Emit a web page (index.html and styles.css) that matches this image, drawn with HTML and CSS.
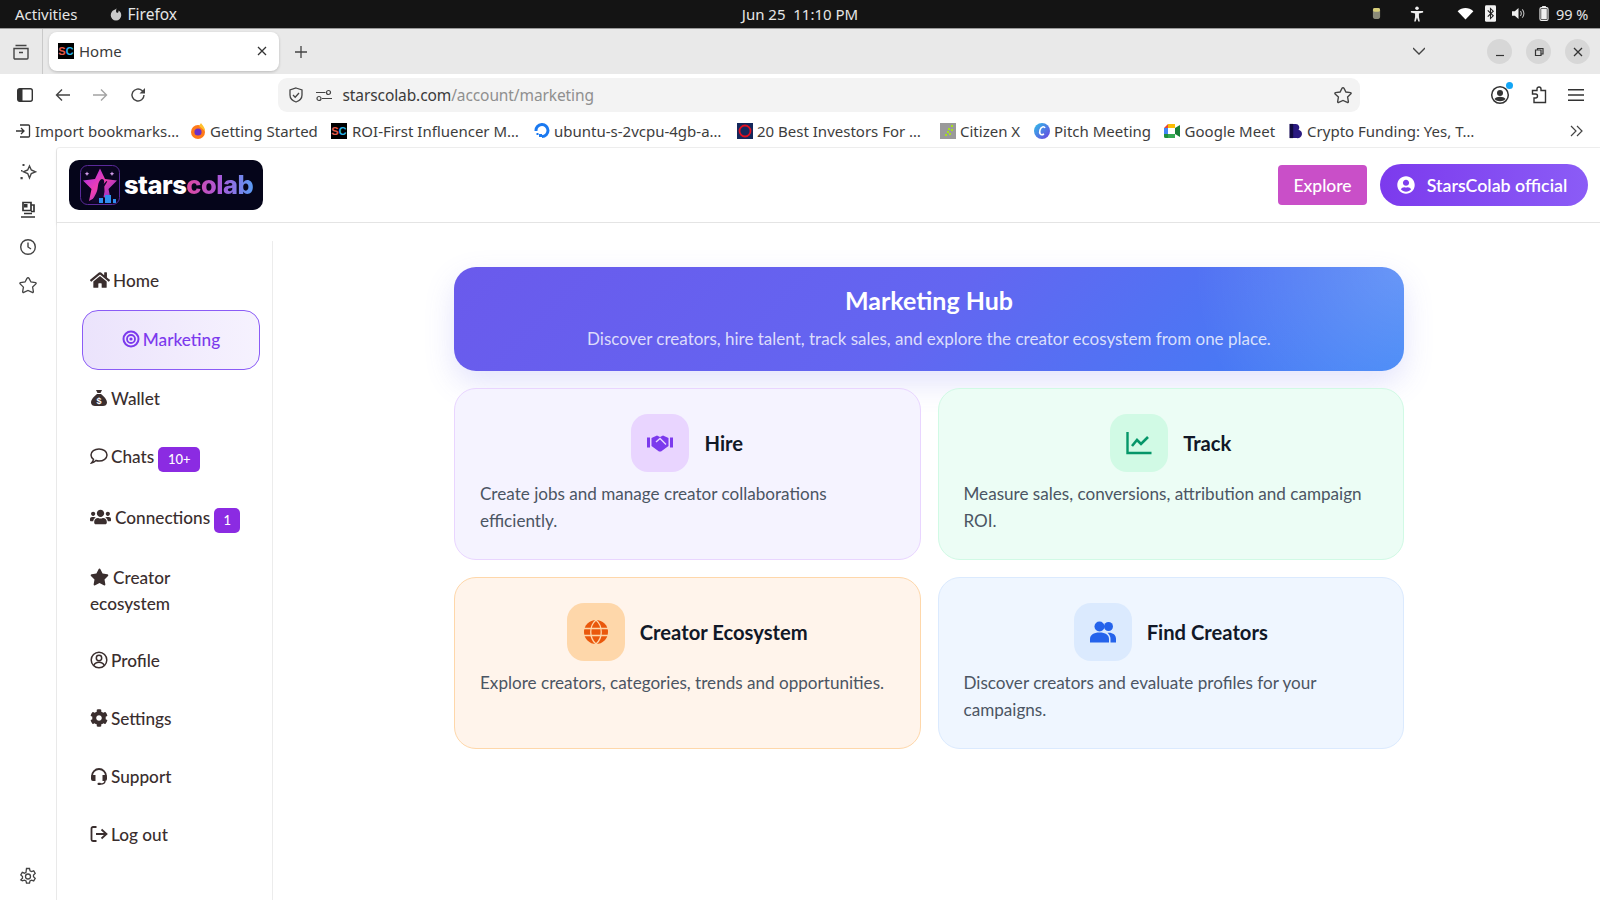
FILE: index.html
```html
<!DOCTYPE html>
<html lang="en">
<head>
<meta charset="utf-8">
<title>Home</title>
<link rel="stylesheet" href="styles.css">
</head>
<body>
<div class="sysbar">
  <div class="sys-left">
    <span>Activities</span>
    <span class="sys-app"><svg class="i14" viewBox="0 0 24 24"><path fill="#c9c9c9" d="M13 2c-1 2-4 2-6 4 0 0-4 3-4 8a9 9 0 0 0 18 0c0-4-2-7-5-8 1 2 0 4-2 4-2 0-2.500-4-1-8z"/></svg>Firefox</span>
  </div>
  <div class="sys-clock">Jun 25&nbsp; 11:10 PM</div>
  <div class="sys-right">
    <svg class="t-can" viewBox="0 0 10 14"><rect x="1" y="1" width="8" height="12" rx="2" fill="#8a8a78"/><rect x="1" y="1" width="8" height="4" rx="2" fill="#d8cf7a"/></svg>
    <svg class="t-acc" viewBox="0 0 16 18"><circle cx="8" cy="2.500" r="2" fill="#eee"/><path fill="#eee" d="M1 5.500h14v1.800l-4.800 1V12l1 5.500h-1.700L8 13l-1.500 4.500H4.800l1-5.500V8.300L1 7.300z"/></svg>
    <svg class="t-wifi" viewBox="0 0 18 14"><path fill="#fff" d="M9 13.500 0.500 4.500C5.500 0 12.500 0 17.500 4.500z"/></svg>
    <svg class="t-bt" viewBox="0 0 12 18"><rect width="12" height="18" rx="1.500" fill="#f2f2f2"/><path fill="none" stroke="#222" stroke-width="1.200" d="M3 5.500l6 6-3 3v-11l3 3-6 6"/></svg>
    <svg class="t-vol" viewBox="0 0 16 14"><path fill="#eee" d="M1 4.500h3L8 1v12L4 9.500H1z"/><path fill="none" stroke="#bbb" stroke-width="1.200" d="M10 4.500a3.500 3.500 0 0 1 0 5M12 2.500a6.500 6.500 0 0 1 0 9"/></svg>
    <svg class="t-bat" viewBox="0 0 10 16"><rect x=".7" y="1.700" width="8.600" height="13.600" rx="1.500" fill="none" stroke="#eee" stroke-width="1.200"/><rect x="3" y="0" width="4" height="1.700" fill="#eee"/><rect x="2" y="3" width="6" height="11" fill="#eee"/></svg>
    <span class="t-pct">99 %</span>
  </div>
</div>

<div class="tabstrip">
  <div class="views"><svg class="i18" viewBox="0 0 18 18"><path fill="none" stroke="#444" stroke-width="1.400" d="M3.500 2.500h11M2 5.500h14v9.500a1 1 0 0 1-1 1H3a1 1 0 0 1-1-1zM7 9.500h4"/></svg></div>
  <div class="tab">
    <span class="fav-sc"><b class="r">S</b><b class="b">C</b></span>
    <span class="tab-title">Home</span>
    <svg class="i12 tab-x" viewBox="0 0 12 12"><path stroke="#333" stroke-width="1.300" d="M2 2l8 8M10 2l-8 8"/></svg>
  </div>
  <svg class="i12 plus" viewBox="0 0 12 12"><path stroke="#444" stroke-width="1.300" d="M6 0v12M0 6h12"/></svg>
  <div class="strip-fill"></div>
  <svg class="i12 chev" viewBox="0 0 12 8"><path fill="none" stroke="#444" stroke-width="1.300" d="M0 1l6 6 6-6"/></svg>
  <div class="winbtns">
    <span class="winbtn"><svg class="i10" viewBox="0 0 10 10"><path stroke="#333" stroke-width="1.200" d="M1 8.500h8"/></svg></span>
    <span class="winbtn"><svg class="i10" viewBox="0 0 10 10"><path fill="none" stroke="#333" stroke-width="1.200" d="M1.500 3h5.500v5.500H1.500zM3.500 3V1.500H9V7H7"/></svg></span>
    <span class="winbtn"><svg class="i12" viewBox="0 0 12 12"><path stroke="#333" stroke-width="1.300" d="M2 2l8 8M10 2l-8 8"/></svg></span>
  </div>
</div>

<div class="navbar">
  <svg class="i16 n-side" viewBox="0 0 16 14"><rect x=".7" y=".7" width="14.600" height="12.600" rx="2" fill="none" stroke="#333" stroke-width="1.400"/><rect x="1" y="1" width="4.500" height="12" fill="#333"/></svg>
  <svg class="i16 n-btn" viewBox="0 0 16 16"><path fill="none" stroke="#444" stroke-width="1.400" d="M15 8H1.500M7 2.500 1.500 8 7 13.500"/></svg>
  <svg class="i16 n-btn" viewBox="0 0 16 16"><path fill="none" stroke="#a3a3a3" stroke-width="1.400" d="M1 8h13.500M9 2.500 14.500 8 9 13.500"/></svg>
  <svg class="i16 n-btn" viewBox="0 0 16 16"><path fill="none" stroke="#444" stroke-width="1.400" d="M14 8a6 6 0 1 1-2-4.500L14 5.500"/><path fill="#444" d="M15 1v5.500H9.500z"/></svg>
  <div class="urlbar">
    <svg class="i16" viewBox="0 0 16 16"><path fill="none" stroke="#444" stroke-width="1.300" d="M8 1l6 2v5c0 3.500-3 6-6 7-3-1-6-3.500-6-7V3z"/><path fill="none" stroke="#444" stroke-width="1.300" d="M5 8l2.200 2.200L11 6"/></svg>
    <svg class="i16 u-sl" viewBox="0 0 16 12"><path stroke="#444" stroke-width="1.200" d="M0 3.500h9.500M6 9.500h10"/><circle cx="12.500" cy="3.500" r="2" fill="none" stroke="#444" stroke-width="1.200"/><circle cx="3" cy="9.500" r="2" fill="none" stroke="#444" stroke-width="1.200"/></svg>
    <span class="url"><span class="url-host">starscolab.com</span><span class="url-path">/account/marketing</span></span>
    <svg class="i18 u-star" viewBox="0 0 576 512"><path fill="none" stroke="#444" stroke-width="44" d="M259.300 37.800 194 160.200 47.900 181.500c-20 3-26 26-12 39l105.700 103-25 145.500c-3 20 17 34 35 25L288 430.600l137.400 62.400c18 9 38-5 35-25l-25-145.500 105.700-103c14-13 8-36-12-39L382 160.200 316.700 37.800c-9-18-48-18-57.400 0z"/></svg>
  </div>
  <div class="nav-right">
    <span class="prof"><svg class="i20" viewBox="0 0 20 20"><circle cx="10" cy="10" r="8.300" fill="none" stroke="#333" stroke-width="1.500"/><circle cx="10" cy="8" r="3" fill="#333"/><path fill="#333" d="M4.500 14c2-3 9-3 11 0-2.500 3-8.500 3-11 0z"/></svg><i class="prof-dot"></i></span>
    <svg class="i18" viewBox="0 0 16 18"><path fill="none" stroke="#333" stroke-width="1.400" d="M6 4.500V3a2 2 0 0 1 4 0v1.500h4.500v12H3v-4.500h1.500a2 2 0 0 0 0-4H1.500V4.500z"/></svg>
    <svg class="i16 burger" viewBox="0 0 14 12"><path stroke="#333" stroke-width="1.300" d="M0 1.500h14M0 6h14M0 10.500h14"/></svg>
  </div>
</div>

<div class="bookmarks">
  <span class="bm bm1"><svg class="i16" viewBox="0 0 16 16"><path fill="none" stroke="#333" stroke-width="1.300" d="M5 2h8.500a1 1 0 0 1 1 1v10a1 1 0 0 1-1 1H5M1 8h8M6 5l3 3-3 3"/></svg>Import bookmarks…</span>
  <span class="bm bm2"><svg class="i16" viewBox="0 0 16 16"><circle cx="8" cy="9" r="7" fill="#ff7a1a"/><path fill="#ffc02e" d="M11 0c1 2 4 4 4 8L9 3z"/><circle cx="8" cy="9" r="3.600" fill="#6b2fc9"/></svg>Getting Started</span>
  <span class="bm bm3"><span class="fav-sc"><b class="r">S</b><b class="b">C</b></span>ROI-First Influencer M…</span>
  <span class="bm bm4"><svg class="i16" viewBox="0 0 16 16"><path fill="none" stroke="#1a79f0" stroke-width="3" d="M8 13.500A6 6 0 1 0 2 8"/><rect x="5" y="11" width="3" height="3" fill="#1a79f0"/><rect x="2.500" y="10" width="2" height="2" fill="#1a79f0"/></svg>ubuntu-s-2vcpu-4gb-a…</span>
  <span class="bm bm5"><svg class="i16" viewBox="0 0 16 16"><rect width="16" height="16" fill="#14285c"/><circle cx="8" cy="8" r="5.500" fill="none" stroke="#e01020" stroke-width="1.800"/></svg>20 Best Investors For …</span>
  <span class="bm bm6"><svg class="i16" viewBox="0 0 16 16"><rect width="16" height="16" fill="#9a9a9a"/><path fill="#a6e01e" d="M11 2h2v2h-2zM8 5h2v2H8zM11 6h2v2h-2zM7 8h2v2H7zM9 10h2v2H9zM5 11h2v2H5z"/></svg>Citizen X</span>
  <span class="bm bm7"><svg class="i16" viewBox="0 0 16 16"><defs><linearGradient id="cg" x1="0" y1="0" x2="1" y2="1"><stop offset="0" stop-color="#2fc0e8"/><stop offset="1" stop-color="#6a3fe0"/></linearGradient></defs><circle cx="8" cy="8" r="8" fill="url(#cg)"/><path fill="none" stroke="#fff" stroke-width="1.600" d="M11 5c-1-2-4-1.500-5 2s.5 6 4 4"/></svg>Pitch Meeting</span>
  <span class="bm bm8"><svg class="i16" viewBox="0 0 16 14"><path fill="#ea4335" d="M0 4l4-4v4z"/><path fill="#fbbc04" d="M4 0h7v4H4z"/><path fill="#4285f4" d="M0 4h4v6H0z"/><path fill="#34a853" d="M4 10h7v4H4z"/><path fill="#188038" d="M11 4v6l5 3V1z"/><path fill="#1e8e3e" d="M0 10h4v4H1.500A1.500 1.500 0 0 1 0 12.500z"/></svg>Google Meet</span>
  <span class="bm bm9"><svg class="i16" viewBox="0 0 16 18"><path fill="#2a1a80" d="M2 1h7a4 4 0 0 1 3 6.500A4.500 4.500 0 0 1 10 17H2z"/><path fill="#120c40" d="M2 1h4v16H2z"/></svg>Crypto Funding: Yes, T…</span>
  <svg class="i14 bm-more" viewBox="0 0 14 12"><path fill="none" stroke="#444" stroke-width="1.200" d="M1 1l5 5-5 5M7 1l5 5-5 5"/></svg>
</div>

<div class="browser-body">
  <aside class="ffside">
    <div class="ff-top">
      <svg class="i18" viewBox="0 0 18 18"><path fill="none" stroke="#444" stroke-width="1.400" d="M10.500 3l1.800 4 4.200 1.800-4.200 1.800-1.800 4.400-1.800-4.400-4.200-1.800 4.200-1.800z"/><path fill="#444" d="M3.500 1h2v2h-2zM1.500 14h2.200v2.200H1.500zM2 7h1.500v1.500H2z"/></svg>
      <svg class="i18" viewBox="0 0 18 18"><path fill="none" stroke="#333" stroke-width="1.700" d="M4 1.500h8v8H4zM12 4h3v6.500h-3M2 16h14M5 12.500h8"/><rect x="5" y="3" width="3.500" height="3.500" fill="#333"/></svg>
      <svg class="i18" viewBox="0 0 18 18"><circle cx="9" cy="9" r="7.300" fill="none" stroke="#444" stroke-width="1.400"/><path fill="none" stroke="#444" stroke-width="1.400" d="M9 4.500V9l3 2"/></svg>
      <svg class="i18" viewBox="0 0 576 512"><path fill="none" stroke="#444" stroke-width="42" d="M259.300 37.800 194 160.200 47.900 181.500c-20 3-26 26-12 39l105.700 103-25 145.500c-3 20 17 34 35 25L288 430.600l137.400 62.400c18 9 38-5 35-25l-25-145.500 105.700-103c14-13 8-36-12-39L382 160.200 316.700 37.800c-9-18-48-18-57.400 0z"/></svg>
    </div>
    <svg class="i18" viewBox="0 0 18 18"><path fill="none" stroke="#444" stroke-width="1.300" d="M7.500 1.500h3l.5 2.300 1.500.8 2.200-.8 1.500 2.600-1.700 1.600v1.700l1.700 1.600-1.500 2.600-2.200-.8-1.500.8-.5 2.300h-3l-.5-2.300-1.500-.8-2.200.8L1.800 12.900l1.700-1.600V9.600L1.800 8 3.300 5.400l2.200.8 1.500-.8z"/><circle cx="9" cy="9.500" r="2.500" fill="none" stroke="#444" stroke-width="1.300"/></svg>
  </aside>

  <div class="page">
    <header class="app-header">
      <div class="logo">
        <svg class="logo-mark" viewBox="0 0 40 40">
          <defs><linearGradient id="lg" x1="0" y1="0" x2="1" y2="1"><stop offset="0" stop-color="#a22bf0"/><stop offset=".5" stop-color="#f03fb0"/><stop offset="1" stop-color="#6a2fd0"/></linearGradient></defs>
          <rect x=".5" y=".5" width="39" height="39" rx="7" fill="#0a0420" stroke="#5b2a9a"/>
          <path fill="url(#lg)" d="M20 3.500l5 10.500 12 1.500-8.500 8.500 2.500 12-11-6-11 6 2.500-12-8.500-8.500 12-1.500z"/>
          <path fill="#12062c" d="M22 14c2.500 0 2.500 3.500 1.700 5l2.800-3 .8.600-3 5 .2 5-2 11H11c3.500-6 6-10 6.500-13.500.5-3 .500-5 1.500-7 .6-1.400 1.800-3.100 3-3.100z"/>
          <path fill="#2f8ff0" d="M19 33h4v5h-4zM25 30h6v8h-6zM33 34h3v4h-3z"/>
          <path fill="#d9a0f0" d="M7 6.500l.7 1.600 1.600.7-1.600.7L7 11.100l-.7-1.600L4.700 8.800l1.600-.7zM32 6.500l.7 1.600 1.600.7-1.600.7-.7 1.600-.7-1.600-1.600-.7 1.600-.7z"/>
        </svg>
        <span class="logo-text">stars<span class="logo-grad">colab</span></span>
      </div>
      <div class="head-actions">
        <button class="explore">Explore</button>
        <button class="account"><svg class="i18" viewBox="0 0 496 512"><path fill="#fff" d="M248 8C111 8 0 119 0 256s111 248 248 248 248-111 248-248S385 8 248 8zm0 96c48.600 0 88 39.400 88 88s-39.400 88-88 88-88-39.400-88-88 39.400-88 88-88zm0 344c-58.700 0-111.300-26.600-146.500-68.200 18.800-35.400 55.600-59.800 98.500-59.800 2.400 0 4.800.4 7.100 1.100 13 4.200 26.600 6.900 40.900 6.900 14.300 0 28-2.700 40.900-6.900 2.300-.7 4.700-1.100 7.100-1.100 42.900 0 79.700 24.400 98.500 59.800C359.300 421.400 306.700 448 248 448z"/></svg>StarsColab official</button>
      </div>
    </header>

    <div class="app-body">
      <nav class="sidenav">
        <a class="nav-item"><svg class="ni w20" viewBox="0 0 576 512"><path d="M280.370 148.260L96 300.110V464a16 16 0 0 0 16 16l112.060-.29a16 16 0 0 0 15.920-16V368a16 16 0 0 1 16-16h64a16 16 0 0 1 16 16v95.640a16 16 0 0 0 16 16.050L464 480a16 16 0 0 0 16-16V300L295.670 148.260a12.190 12.190 0 0 0-15.300 0zM571.600 251.470L488 182.560V44.050a12 12 0 0 0-12-12h-56a12 12 0 0 0-12 12v72.610L318.470 43a48 48 0 0 0-61 0L4.340 251.470a12 12 0 0 0-1.600 16.900l25.500 31A12 12 0 0 0 45.150 301l235.220-193.740a12.190 12.190 0 0 1 15.300 0L530.900 301a12 12 0 0 0 16.900-1.600l25.500-31a12 12 0 0 0-1.700-16.930z"/></svg>Home</a>
        <a class="nav-item active"><svg class="ni" viewBox="0 0 18 18"><circle cx="9" cy="9" r="7.500" fill="none" stroke="#7c3aed" stroke-width="2"/><circle cx="9" cy="9" r="4" fill="none" stroke="#7c3aed" stroke-width="1.800"/><circle cx="9" cy="9" r="1.600" fill="#7c3aed"/></svg>Marketing</a>
        <a class="nav-item"><svg class="ni" viewBox="0 0 18 18"><path d="M6 1h6l-1.500 3h-3zM7 5h4c3 2.500 6 5.500 6 8.500 0 2.500-2 3.500-4 3.500H5c-2 0-4-1-4-3.500C1 10.500 4 7.500 7 5z"/><text class="dollar" x="9" y="14.500">$</text></svg>Wallet</a>
        <a class="nav-item"><svg class="ni" viewBox="0 0 18 18"><path fill="none" stroke="currentColor" stroke-width="1.500" d="M9 2c4.400 0 8 2.600 8 6s-3.600 6-8 6c-1 0-2-.1-3-.5-1 1-2.500 2.200-4.500 2.500 1-1.200 1.700-2.300 2-3.700C2 11.200 1 9.700 1 8c0-3.400 3.600-6 8-6z"/></svg>Chats<span class="badge">10+</span></a>
        <a class="nav-item"><svg class="ni w21" viewBox="0 0 640 512"><path d="M96 224c35.300 0 64-28.700 64-64s-28.700-64-64-64-64 28.700-64 64 28.700 64 64 64zm448 0c35.300 0 64-28.700 64-64s-28.700-64-64-64-64 28.700-64 64 28.700 64 64 64zm32 32h-64c-17.600 0-33.500 7.100-45.100 18.600 40.300 22.100 68.900 62 75.100 109.400h66c17.700 0 32-14.300 32-32v-32c0-35.300-28.700-64-64-64zm-256 0c61.900 0 112-50.100 112-112S381.900 32 320 32 208 82.100 208 144s50.100 112 112 112zm76.800 32h-8.300c-20.800 10-43.900 16-68.500 16s-47.600-6-68.500-16h-8.300C179.600 288 128 339.600 128 403.200V432c0 26.500 21.500 48 48 48h288c26.500 0 48-21.500 48-48v-28.800c0-63.600-51.600-115.200-115.200-115.200zm-223.700-13.400C161.500 263.100 145.600 256 128 256H64c-35.300 0-64 28.700-64 64v32c0 17.700 14.300 32 32 32h65.900c6.300-47.400 34.900-87.300 75.200-109.400z"/></svg>Connections<span class="badge one">1</span></a>
        <a class="nav-item"><svg class="ni w19" viewBox="0 0 576 512"><path d="M259.300 17.800L194 150.200 47.900 171.500c-26.200 3.800-36.700 36.100-17.700 54.600l105.700 103-25 145.500c-4.500 26.300 23.200 46 46.400 33.700L288 439.600l130.700 68.700c23.200 12.200 50.900-7.400 46.400-33.700l-25-145.500 105.700-103c19-18.500 8.500-50.800-17.700-54.600L382 150.200 316.700 17.800c-11.700-23.600-45.600-23.900-57.400 0z"/></svg>Creator ecosystem</a>
        <a class="nav-item"><svg class="ni" viewBox="0 0 18 18"><circle cx="9" cy="9" r="7.800" fill="none" stroke="currentColor" stroke-width="1.500"/><circle cx="9" cy="7" r="2.700" fill="none" stroke="currentColor" stroke-width="1.500"/><path fill="none" stroke="currentColor" stroke-width="1.500" d="M3.800 14.500c1-2.500 3-3.200 5.200-3.200s4.200.7 5.200 3.200"/></svg>Profile</a>
        <a class="nav-item"><svg class="ni" viewBox="0 0 512 512"><path d="M487.400 315.700l-42.600-24.600c4.300-23.200 4.300-47 0-70.200l42.600-24.600c4.900-2.800 7.100-8.600 5.500-14-11.100-35.600-30-67.800-54.700-94.600-3.800-4.100-10-5.100-14.800-2.300L380.800 110c-17.900-15.400-38.500-27.300-60.800-35.100V25.800c0-5.600-3.900-10.500-9.400-11.700-36.700-8.200-74.300-7.800-109.200 0-5.500 1.200-9.400 6.100-9.400 11.700V75c-22.200 7.900-42.800 19.800-60.800 35.100L88.700 85.500c-4.900-2.800-11-1.900-14.800 2.300-24.700 26.700-43.600 58.900-54.700 94.600-1.700 5.400.6 11.200 5.500 14L67.300 221c-4.300 23.200-4.300 47 0 70.200l-42.600 24.600c-4.900 2.800-7.100 8.600-5.500 14 11.100 35.600 30 67.800 54.700 94.600 3.800 4.100 10 5.100 14.800 2.300l42.600-24.600c17.900 15.400 38.500 27.300 60.800 35.100v49.200c0 5.600 3.900 10.500 9.400 11.700 36.700 8.200 74.300 7.800 109.200 0 5.500-1.200 9.400-6.100 9.400-11.700v-49.200c22.200-7.900 42.800-19.800 60.800-35.100l42.600 24.600c4.900 2.800 11 1.900 14.800-2.300 24.700-26.700 43.600-58.900 54.700-94.600 1.500-5.500-.7-11.300-5.600-14.100zM256 336c-44.100 0-80-35.900-80-80s35.900-80 80-80 80 35.900 80 80-35.900 80-80 80z"/></svg>Settings</a>
        <a class="nav-item"><svg class="ni" viewBox="0 0 18 18"><path fill="none" stroke="currentColor" stroke-width="1.800" d="M2 9.500V9a7 7 0 0 1 14 0v.5"/><path d="M2 8h3.500v6H3a2 2 0 0 1-2-2v-2a2 2 0 0 1 1-2zM12.500 8H16a2 2 0 0 1 1 2v2a2 2 0 0 1-2 2h-2.500z"/><path fill="none" stroke="currentColor" stroke-width="1.400" d="M15 14c0 2-2 3-4.500 3"/><rect x="7.500" y="15.700" width="3.500" height="2.300" rx="1"/></svg>Support</a>
        <a class="nav-item"><svg class="ni" viewBox="0 0 18 18"><path fill="none" stroke="currentColor" stroke-width="1.800" d="M6.500 2H3a1.500 1.500 0 0 0-1.500 1.500v11A1.500 1.500 0 0 0 3 16h3.500M6 9h10.500M11.500 4.500 16.500 9l-5 4.500"/></svg>Log out</a>
      </nav>

      <main class="main">
        <section class="hero">
          <h1>Marketing Hub</h1>
          <p>Discover creators, hire talent, track sales, and explore the creator ecosystem from one place.</p>
        </section>
        <section class="cards">
          <article class="card purple">
            <div class="card-head"><span class="card-ico"><svg class="ci" viewBox="0 0 26 18"><path fill="#7c3aed" d="M0 3.500h3v10H0zM23 3.500h3v10h-3zM4.500 4 10 1.500l3 1.500 3-1.500L21.500 4v8L14 17.500h-2L4.500 12z"/><path fill="none" stroke="#e9d5ff" stroke-width="1.400" d="M9 8l4-3.500 6 6"/></svg></span><h2>Hire</h2></div>
            <p>Create jobs and manage creator collaborations efficiently.</p>
          </article>
          <article class="card green">
            <div class="card-head"><span class="card-ico"><svg class="ci" viewBox="0 0 26 24"><path fill="none" stroke="#059669" stroke-width="2.400" d="M1.500 1v21h24"/><path fill="none" stroke="#059669" stroke-width="2.600" d="M6 15l5-6 4 4 7-7"/></svg></span><h2>Track</h2></div>
            <p>Measure sales, conversions, attribution and campaign ROI.</p>
          </article>
          <article class="card orange">
            <div class="card-head"><span class="card-ico"><svg class="ci" viewBox="0 0 24 24"><circle cx="12" cy="12" r="12" fill="#ea580c"/><path fill="none" stroke="#fed7aa" stroke-width="1.300" d="M0 8.500h24M0 15.500h24M12 0c-7 6-7 18 0 24M12 0c7 6 7 18 0 24"/></svg></span><h2>Creator Ecosystem</h2></div>
            <p>Explore creators, categories, trends and opportunities.</p>
          </article>
          <article class="card blue">
            <div class="card-head"><span class="card-ico"><svg class="ci" viewBox="0 0 26 22"><circle cx="9.500" cy="5.500" r="5" fill="#2563eb"/><circle cx="18.500" cy="5.500" r="4.500" fill="#2563eb"/><path fill="#2563eb" d="M0 21.500v-3.500c0-4 3.500-6.500 9.500-6.500s9.500 2.500 9.500 6.500v3.500z"/><path fill="#2563eb" d="M20.500 21.500V18c0-2.500-1-4.500-3-6.300 5-.5 8.500 1.800 8.500 6v3.800z"/></svg></span><h2>Find Creators</h2></div>
            <p>Discover creators and evaluate profiles for your campaigns.</p>
          </article>
        </section>
      </main>
    </div>
  </div>
</div>
</body>
</html>
```
FILE: styles.css
```css
* { box-sizing: border-box; }
html, body { margin: 0; height: 100%; }
body {
  width: 1600px; height: 900px; overflow: hidden;
  display: flex; flex-direction: column;
  background: #fff;
  font-family: "Noto Sans", "Open Sans", sans-serif;
  color: #3a3a3a;
}
svg { display: block; flex: none; }
.i10 { width: 10px; height: 10px; }
.i12 { width: 12px; height: 12px; }
.i14 { width: 14px; height: 14px; }
.i16 { width: 16px; height: 16px; }
.i18 { width: 18px; height: 18px; }
.i20 { width: 20px; height: 20px; }

/* system bar */
.sysbar {
  height: 29px; flex: none; display: grid; grid-template-columns: 1fr auto 1fr; align-items: center;
  background: #141414; border-bottom: 1px solid #9a9a9a;
  color: #e6e6e6; font-size: 15px; padding: 0 15px 1px 15px;
}
.sys-left { display: flex; gap: 31px; align-items: center; }
.sys-app { display: flex; align-items: center; gap: 5px; font-size: 15.500px; }
.sys-clock { font-size: 15px; }
.sys-right { display: flex; align-items: center; justify-content: flex-end; }
.t-can { width: 9px; height: 13px; margin-right: 29px; }
.t-acc { width: 14px; height: 16px; margin-right: 33px; }
.t-wifi { width: 17px; height: 13px; margin-right: 11px; }
.t-bt { width: 11px; height: 17px; margin-right: 15px; }
.t-vol { width: 15px; height: 13px; margin-right: 13px; }
.t-bat { width: 10px; height: 15px; margin-right: 7px; }
.t-pct { font-size: 14.500px; width: 29px; white-space: nowrap; }

/* tab strip */
.tabstrip {
  height: 45px; flex: none; display: flex; align-items: center;
  background: #e9e9e9; padding-right: 10px;
}
.views { width: 43px; height: 100%; display: flex; align-items: center; justify-content: center; border-right: 1px solid #c9c9c9; margin-right: 6px; }
.tab {
  width: 230px; height: 39px; background: #fff; border-radius: 8px;
  box-shadow: 0 1px 3px rgba(0,0,0,.2); display: flex; align-items: center;
  padding: 0 11px 0 9px; font-size: 15px; margin-bottom: 1px;
}
.tab-title { margin-left: 5px; flex: 1; }
.fav-sc {
  width: 16px; height: 16px; background: #000; display: inline-flex; align-items: center; justify-content: center;
  font: 700 11px/16px "Liberation Sans", sans-serif; flex: none;
}
.fav-sc b { font-weight: 700; }
.fav-sc .r { color: #e25a4a; }
.fav-sc .b { color: #28b4e8; }
.plus { margin-left: 16px; }
.strip-fill { flex: 1; }
.chev { margin-right: 62px; margin-bottom: 2px; }
.winbtns { display: flex; gap: 14px; }
.winbtn { width: 25px; height: 25px; border-radius: 50%; background: #d7d7d7; display: flex; align-items: center; justify-content: center; }

/* nav bar */
.navbar { height: 38px; flex: none; display: flex; align-items: center; padding: 4px 0 0 17px; background: #fff; }
.n-side, .n-btn { margin-right: 21.500px; }
.urlbar {
  width: 1082px; height: 34px; margin-left: 110.500px; background: #f3f3f3; border-radius: 9px;
  display: flex; align-items: center; padding: 0 8px 0 10px; font-size: 15.500px; letter-spacing: -.1px;
}
.u-sl { margin-left: 12px; margin-right: 11px; }
.url { flex: 1; white-space: nowrap; }
.url-host { color: #3a3a3a; }
.url-path { color: #8f8f8f; }
.nav-right { margin-left: auto; display: flex; align-items: center; gap: 20px; padding-right: 16px; }
.prof { position: relative; display: block; }
.prof-dot { position: absolute; right: -3px; top: -3px; width: 7px; height: 7px; background: #12a5f5; border-radius: 50%; }

/* bookmarks */
.bookmarks { height: 35px; flex: none; display: flex; align-items: center; padding: 2px 16px 0 15px; font-size: 15px; color: #3d3d3d; white-space: nowrap; }
.bm { display: flex; align-items: center; gap: 4px; flex: none; }
.bm1 { width: 175px; }
.bm2 { width: 141px; }
.bm3 { width: 203px; gap: 5px; }
.bm4 { width: 203px; }
.bm5 { width: 203px; }
.bm6 { width: 94px; }
.bm7 { width: 129.600px; }
.bm8 { width: 123.500px; gap: 5px; }
.bm9 { width: 270px; }
.bm-more { margin-left: auto; }

/* browser body */
.browser-body { flex: 1; display: flex; min-height: 0; }
.ffside { width: 56px; flex: none; display: flex; flex-direction: column; align-items: center; justify-content: space-between; padding: 16px 0 15px; }
.ff-top { display: flex; flex-direction: column; align-items: center; gap: 19.500px; }
.page { flex: 1; display: flex; flex-direction: column; min-width: 0; border-left: 1px solid #e9e9e9; border-top: 1px solid #eeeeee; border-top-left-radius: 4px; }

/* app header */
.app-header {
  height: 75px; flex: none; display: flex; align-items: center; justify-content: space-between;
  padding: 0 12px 0 12px; border-bottom: 1px solid #e4e4e4; box-shadow: 0 2px 3px rgba(0,0,0,.08);
}
.logo { width: 194px; height: 50px; background: #05051a; border-radius: 10px; display: flex; align-items: center; padding-left: 11px; gap: 4px; }
.logo-mark { width: 40px; height: 40px; }
.logo-text { font: 800 25.500px/1 "Inter", "Noto Sans", sans-serif; color: #fff; letter-spacing: -.5px; }
.logo-grad { background: linear-gradient(90deg, #e0489f, #a958d8 50%, #5a9cf5); -webkit-background-clip: text; background-clip: text; color: transparent; }
.head-actions { display: flex; align-items: center; gap: 13px; }
.explore {
  width: 89px; height: 40px; background: #c94fc8; border: 0; border-radius: 4px;
  color: #fff; font: 500 17.500px "Lato", sans-serif;
}
.account {
  width: 208px; height: 42px; border: 0; border-radius: 21px; color: #fff;
  background: linear-gradient(90deg, #7c3aed, #8b5cf6); font: 600 17.800px "Lato", sans-serif;
  display: flex; align-items: center; justify-content: center; gap: 12px; padding: 0 4px 0 0;
}

/* app body */
.app-body { flex: 1; display: flex; min-height: 0; background: #fff; }
.sidenav {
  width: 216px; flex: none; margin-top: 18px; padding: 11px 12px 0 25px;
  border-right: 1px solid #ececec;
  font: 500 17.200px/25.200px "Lato", sans-serif; color: #3a2e2e;
}
.nav-item { display: block; padding: 16.200px 8px 16.500px; }
.nav-item .ni { display: inline-block; width: 18px; height: 18px; fill: currentColor; margin-right: 3px; vertical-align: -2px; }
.nav-item .ni.w20 { width: 20px; }
.nav-item .ni.w21 { width: 21px; margin-right: 4px; }
.nav-item .ni.w19 { width: 19px; margin-right: 4px; }
.dollar { fill: #fff; font: 800 9px "Liberation Sans", sans-serif; text-anchor: middle; }
.nav-item.active {
  height: 60px; margin: 0; padding: 16px 8px; text-align: center; color: #7c3aed;
  background: linear-gradient(90deg, #ebe3fc, #f6f2fe); border: 1.500px solid #8b5cf6; border-radius: 16px;
}
.badge {
  display: inline-block; min-width: 42px; height: 25px; margin-left: 4px; border-radius: 5px; background: #8b2be2; color: #fff;
  font: 500 13px/25px "Lato", sans-serif; text-align: center; vertical-align: -1px;
}
.badge.one { min-width: 26px; }

/* main */
.main { flex: 1; padding: 44px 0 0 181px; min-width: 0; }
.hero {
  width: 950px; height: 104px; border-radius: 22px; color: #fff; text-align: center; padding-top: 17px;
  background: radial-gradient(circle at 100% 0, rgba(255,255,255,.2), rgba(255,255,255,0) 22%), linear-gradient(135deg, #6a5aec 0%, #6366f1 50%, #3b82f6 100%);
  box-shadow: 0 12px 30px rgba(99,102,241,.18);
}
.hero h1 { margin: 0; font: 700 25px/32px "Lato", sans-serif; }
.hero p { margin: 11px 0 0; font: 400 17px/24px "Lato", sans-serif; color: rgba(255,255,255,.78); }
.cards { width: 950px; margin-top: 17px; display: grid; grid-template-columns: 466.500px 466.500px; gap: 17px; }
.card { height: 172px; border-radius: 22px; border: 1px solid; padding: 25px 25px 0; }
.card-head { display: flex; justify-content: center; align-items: center; gap: 15px; }
.card-ico { width: 58px; height: 58px; border-radius: 17px; display: flex; align-items: center; justify-content: center; }
.ci { width: 26px; height: 24px; }
.card h2 { margin: 0; font: 700 20.200px/28px "Lato", sans-serif; color: #111827; }
.card p { margin: 9px 0 0; font: 400 17.100px/26.500px "Lato", sans-serif; color: #4b5563; }
.purple { background: #f5f3ff; border-color: #e9d5ff; }
.purple .card-ico { background: #e9d5ff; }
.green { background: #ecfdf5; border-color: #d1fae5; }
.green .card-ico { background: #d1fae5; }
.orange { background: #fff4eb; border-color: #fed7aa; }
.orange .card-ico { background: #fed7aa; }
.blue { background: #eff6ff; border-color: #dbeafe; }
.blue .card-ico { background: #dbeafe; }
```
